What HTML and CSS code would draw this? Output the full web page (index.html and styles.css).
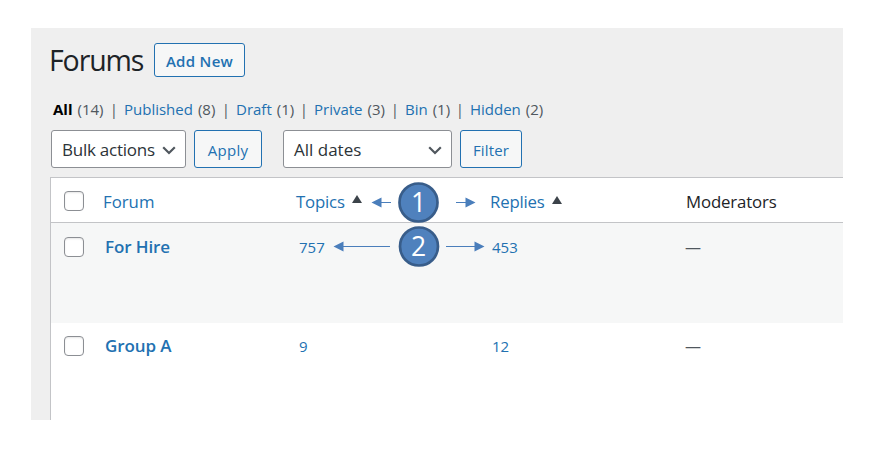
FILE: index.html
```html
<!DOCTYPE html>
<html lang="en">
<head>
<meta charset="utf-8">
<title>Forums</title>
<link rel="stylesheet" href="styles.css">
</head>
<body>
<main class="panel">
  <header class="heading">
    <h1>Forums</h1>
    <a class="button add-new">Add New</a>
  </header>
  <ul class="views">
    <li><b>All</b><span>(14)</span><i>|</i></li>
    <li><a>Published</a><span>(8)</span><i>|</i></li>
    <li><a>Draft</a><span>(1)</span><i>|</i></li>
    <li><a>Private</a><span>(3)</span><i>|</i></li>
    <li><a>Bin</a><span>(1)</span><i>|</i></li>
    <li><a>Hidden</a><span>(2)</span></li>
  </ul>
  <div class="filters">
    <div class="select bulk"><span>Bulk actions</span><svg width="14" height="9" viewBox="0 0 14 9"><path d="M1.2 1.3 7 7l5.8-5.7"/></svg></div>
    <a class="button apply">Apply</a>
    <div class="select dates"><span>All dates</span><svg width="14" height="9" viewBox="0 0 14 9"><path d="M1.2 1.3 7 7l5.8-5.7"/></svg></div>
    <a class="button filter">Filter</a>
  </div>
  <section class="table">
    <div class="row head">
      <span class="check"></span>
      <a>Forum</a>
      <a class="sortable">Topics<svg class="sort" width="10" height="8" viewBox="0 0 10 8"><path d="M5 0l5 8H0z"/></svg></a>
      <a class="sortable">Replies<svg class="sort low" width="10" height="8" viewBox="0 0 10 8"><path d="M5 0l5 8H0z"/></svg></a>
      <span class="mods">Moderators</span>
    </div>
    <div class="row item striped">
      <span class="check"></span>
      <a class="name">For Hire</a>
      <a class="num">757</a>
      <a class="num last">453</a>
      <span class="none">—</span>
    </div>
    <div class="row item">
      <span class="check"></span>
      <a class="name">Group A</a>
      <a class="num">9</a>
      <a class="num last">12</a>
      <span class="none">—</span>
    </div>
  </section>
  <svg class="callouts" width="160" height="90" viewBox="330 180 160 90">
    <path class="line" d="M380 202.500h11M456 202.500h11M342 246.500h48M446 246.500h30"/>
    <path class="tip" d="M371.500 202.500l10-5v10zM475.500 202.500l-10-5v10zM333.500 246.500l10-5v10zM484.500 246.500l-10-5v10z"/>
    <circle cx="418.500" cy="202.500" r="19"/>
    <circle cx="419" cy="246.500" r="19"/>
    <text x="418.500" y="211.800">1</text>
    <text x="418.500" y="256">2</text>
  </svg>
</main>
</body>
</html>
```

FILE: styles.css
```css
* { box-sizing: border-box; }
body {
  margin: 0;
  padding: 28px 0 0 31px;
  background: #fff;
  color: #1d2327;
  font: 15px/20px "Open Sans", "Noto Sans", sans-serif;
}
.panel {
  position: relative;
  display: flex;
  flex-direction: column;
  width: 812px;
  height: 392px;
  background: #efefef;
  overflow: hidden;
}
a { color: #2271b1; white-space: nowrap; }
.heading { display: flex; flex: none; margin: 15px 0 0 18px; height: 34px; }
h1 {
  flex: 0 0 105px;
  margin: 0;
  font-size: 28.500px;
  font-weight: 400;
  line-height: 34px;
  letter-spacing: -1.100px;
}
.button {
  display: flex;
  align-items: center;
  justify-content: center;
  border: 1px solid #2271b1;
  border-radius: 3px;
  background: #f6f7f7;
}
.add-new { width: 91px; font-weight: 600; padding-top: 2px; letter-spacing: 0.300px; }
.views {
  display: grid;
  flex: none;
  grid-template-columns: 71px 112px 78px 91px 65px 90px;
  margin: 22px 0 0 22px;
  padding: 0;
  list-style: none;
  height: 20px;
  color: #50575e;
}
.views li { display: flex; }
.views b { color: #000; }
.views span { margin-left: 5px; }
.views i { margin-left: auto; padding-right: 6px; font-style: normal; }
.filters { display: flex; flex: none; height: 38px; margin: 11px 0 0 20px; }
.select {
  display: flex;
  align-items: center;
  justify-content: space-between;
  padding: 0 9px 0 10px;
  border: 1px solid #8c8f94;
  border-radius: 3px;
  background: #fff;
  color: #2c3338;
  font-size: 17px;
  white-space: nowrap;
}
.select span { padding-top: 1px; }
.select svg { fill: none; stroke: #50575e; stroke-width: 2.200; margin-top: 2px; }
.bulk { width: 135px; letter-spacing: -0.250px; }
.apply { width: 68px; margin-left: 8px; padding-top: 2px; letter-spacing: 0.300px; }
.dates { width: 169px; margin-left: 21px; }
.filter { width: 62px; margin-left: 8px; padding-top: 2px; letter-spacing: 0.150px; }
.table {
  flex: 1;
  margin: 9px 0 0 19px;
  border: solid #c3c4c7;
  border-width: 1px 0 0 1px;
  background: #fff;
}
.row {
  display: grid;
  grid-template-columns: 39px 193px 194px 196px 1fr;
  padding-left: 13px;
}
.head {
  height: 45px;
  align-items: center;
  padding-top: 3px;
  border-bottom: 1px solid #c3c4c7;
  font-size: 16.800px;
}
.head .check { margin-top: -2px; }
.sortable { display: flex; letter-spacing: -0.200px; }
.mods { letter-spacing: -0.150px; }
.sort { fill: #3c434a; margin: 3px 0 0 7px; }
.sort.low { margin-top: 4px; }
.item { height: 100px; padding-top: 14px; align-items: start; }
.item + .item { padding-top: 13px; }
.striped { background: #f6f7f7; }
.check {
  width: 20px;
  height: 20px;
  border: 1px solid #8c8f94;
  border-radius: 4px;
  background: #fff;
  box-shadow: inset 0 1px 2px rgba(0, 0, 0, .1);
}
.name { margin-left: 2px; font-size: 17px; font-weight: 600; letter-spacing: -0.100px; }
.num { margin-left: 3px; }
.num.last { margin-left: 2px; }
.none { margin-left: -1px; color: #50575e; font-size: 16px; }
.callouts { position: absolute; left: 299px; top: 152px; }
.callouts .line { fill: none; stroke: #4a7ebb; stroke-width: 1; }
.callouts .tip { fill: #4a7ebb; }
.callouts circle { fill: #4f81bd; stroke: #385d8a; stroke-width: 2.700; }
.callouts text { fill: #fff; font: 500 26.500px "Open Sans", sans-serif; text-anchor: middle; }
```
